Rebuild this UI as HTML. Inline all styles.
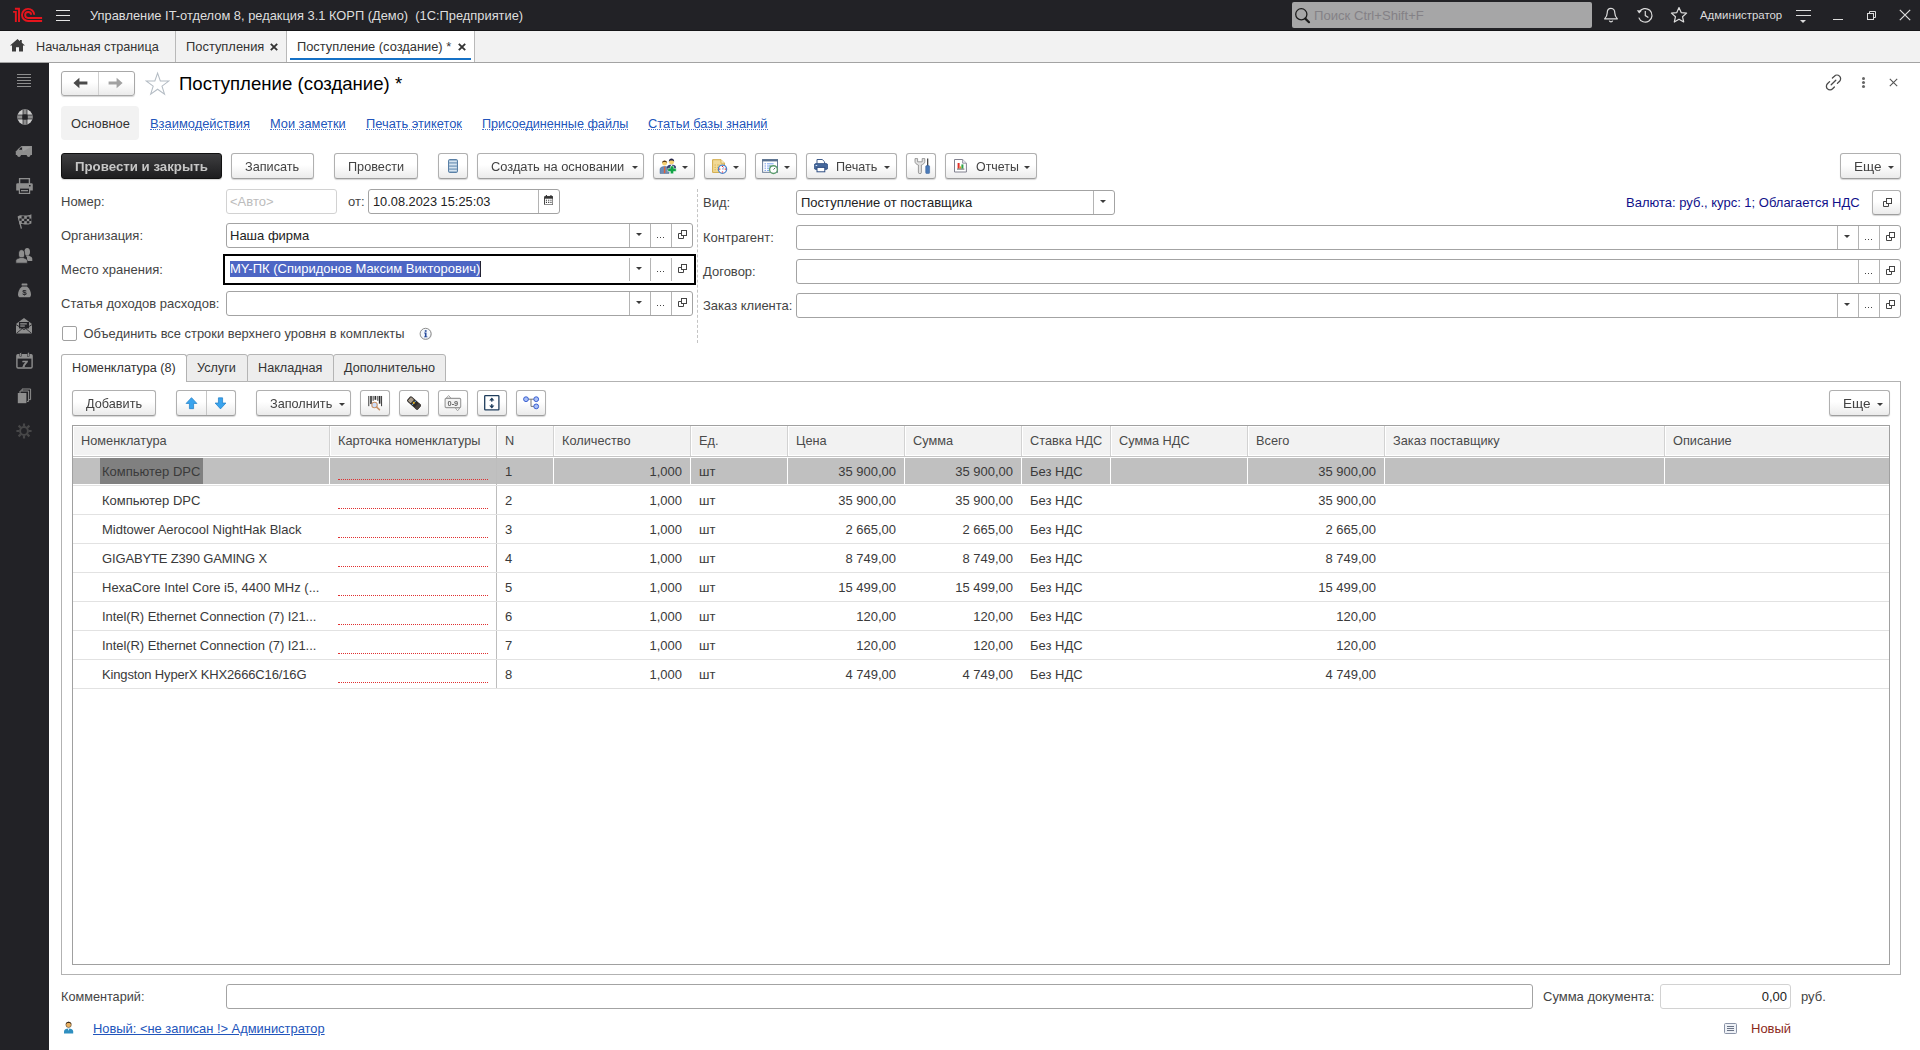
<!DOCTYPE html>
<html lang="ru">
<head>
<meta charset="utf-8">
<title>Поступление (создание) *</title>
<style>
*{box-sizing:border-box;margin:0;padding:0}
html,body{width:1920px;height:1050px;overflow:hidden;background:#fff}
body{font-family:"Liberation Sans",sans-serif;font-size:13px;color:#333;position:relative}
.a{position:absolute}
.t{position:absolute;white-space:pre;line-height:16px;height:16px}
#titlebar{position:absolute;left:0;top:0;width:1920px;height:31px;background:#222226;border-bottom:1px solid #151517}
#tabbar{position:absolute;left:0;top:31px;width:1920px;height:32px;background:#f2f2f2;border-bottom:1px solid #a3a3a3}
#sidebar{position:absolute;left:0;top:63px;width:49px;height:987px;background:#222226}
.tsep{position:absolute;top:0;width:1px;height:31px;background:#b9b9b9}
.btn{position:absolute;height:26px;border:1px solid #b0b0b0;border-bottom-color:#9e9e9e;border-radius:3px;background:linear-gradient(#fff,#fff 45%,#ebebeb);box-shadow:0 1px 1px rgba(0,0,0,.17);white-space:pre;color:#424242;font-size:12.7px}
.btn .t{top:5px;will-change:transform}
.btn.dark{background:linear-gradient(#3e3e40,#1d1d1f);border-color:#111;color:#c6c6c6;font-weight:bold}
.car{position:absolute;width:0;height:0;border-left:3.5px solid transparent;border-right:3.5px solid transparent;border-top:3.5px solid #3c3c3c}
.inp{position:absolute;height:26px;border:1px solid #a3a3a3;border-radius:3px;background:#fff}
.inp.dis{border-color:#d2d2d2}
.ib{position:absolute;top:0;bottom:0;width:1px;background:#b4b4b4}
.dots{position:absolute;white-space:pre;font-size:11px;line-height:12px;color:#444;letter-spacing:0}
a.l{position:absolute;white-space:pre;line-height:16px;color:#2255bb;text-decoration:none;height:14px;border-bottom:1px dotted #4a74c9}
.th{position:absolute;top:1px;height:28px;background:#f2f2f2}
.th span{position:absolute;left:7px;top:6px;line-height:16px;white-space:pre;color:#4a4a4a;font-size:12.75px}
.c{position:absolute;white-space:pre;line-height:16px;height:16px;color:#3a3a3a}
.r{text-align:right}
.hl{position:absolute;left:1px;height:1px;background:#e2e2e2}
.vl{position:absolute;width:1px;background:#d6d6d6}
</style>
</head>
<body>
<div id="titlebar">
<svg class="a" style="left:0;top:0" width="50" height="31" viewBox="0 0 50 31"><g fill="none" stroke="#e5151d" stroke-width="1.9"><path d="M14.9 8.75 H19 V22"/><path d="M13.1 11.9 H15.85 V22"/><path d="M34.2 14.7 A6.1 6.1 0 1 0 28.1 21.05 H42.1"/><path d="M31.15 14.8 A3 3 0 1 0 28.2 17.95 H42.1"/></g></svg>
<div class="a" style="left:56px;top:10px;width:14px;height:1px;background:#e4e4e4;box-shadow:0 5px 0 #e4e4e4,0 10px 0 #e4e4e4"></div>
<div class="t" style="left:90px;top:8px;color:#dedede;font-size:12.86px">Управление IT-отделом 8, редакция 3.1 КОРП (Демо)  (1С:Предприятие)</div>
<div class="a" style="left:1292px;top:2px;width:300px;height:26px;background:#a6a6a7;border-radius:2px"></div>
<svg class="a" style="left:1294px;top:7px" width="18" height="18" viewBox="0 0 18 18"><circle cx="7.3" cy="7.3" r="5.6" fill="none" stroke="#1c1c1c" stroke-width="1.3"/><path d="M11.3 11.6 L15 15.2" stroke="#1c1c1c" stroke-width="2.2" stroke-linecap="round"/></svg>
<div class="t" style="left:1314px;top:7.5px;color:#848186;font-size:13.1px">Поиск Ctrl+Shift+F</div>
<svg class="a" style="left:1603px;top:7px" width="16" height="17" viewBox="0 0 16 17"><path d="M8 1.3 C5.2 1.3 4.2 3.6 4.2 6 C4.2 9.2 2.8 10.6 1.6 11.8 H14.4 C13.2 10.6 11.8 9.2 11.8 6 C11.8 3.6 10.8 1.3 8 1.3 Z" fill="none" stroke="#dcdcdc" stroke-width="1.2" stroke-linejoin="round"/><path d="M6.3 13.6 A1.8 1.8 0 0 0 9.7 13.6" fill="none" stroke="#dcdcdc" stroke-width="1.2"/></svg>
<svg class="a" style="left:1636px;top:6px" width="18" height="18" viewBox="0 0 18 18"><path d="M3.2 6.2 A6.8 6.8 0 1 1 2.8 11.6" fill="none" stroke="#dcdcdc" stroke-width="1.2"/><path d="M0.8 4.2 L3.2 7.4 L6 4.6 Z" fill="#dcdcdc"/><path d="M9.3 5 V9.6 L12.4 11.6" fill="none" stroke="#dcdcdc" stroke-width="1.2"/></svg>
<svg class="a" style="left:1670px;top:6px" width="18" height="18" viewBox="0 0 18 18"><path d="M9 1.6 L11.2 6.6 L16.6 7.1 L12.5 10.7 L13.7 16 L9 13.2 L4.3 16 L5.5 10.7 L1.4 7.1 L6.8 6.6 Z" fill="none" stroke="#dcdcdc" stroke-width="1.2" stroke-linejoin="round"/></svg>
<div class="t" style="left:1700px;top:8px;color:#dcdcdc;font-size:11.4px;line-height:14px">Администратор</div>
<div class="a" style="left:1796px;top:10px;width:15px;height:1px;background:#dcdcdc;box-shadow:0 5px 0 #dcdcdc"></div><div class="a" style="left:1799px;top:15px;width:9px;height:1px;background:#222226"></div>
<div class="a" style="left:1796px;top:10px;width:15px;height:1px;background:#dcdcdc"></div><div class="a" style="left:1796px;top:15px;width:15px;height:1px;background:#dcdcdc"></div><div class="a" style="left:1800px;top:20px;width:0;height:0;border-left:3.5px solid transparent;border-right:3.5px solid transparent;border-top:3.5px solid #dcdcdc"></div>
<div class="a" style="left:1833px;top:19px;width:10px;height:1px;background:#dcdcdc"></div>
<svg class="a" style="left:1866px;top:10px" width="11" height="11" viewBox="0 0 11 11"><path d="M3.5 3 V1.5 H9.5 V7.5 H8" fill="none" stroke="#dcdcdc" stroke-width="1"/><rect x="1.5" y="3.5" width="6" height="6" fill="none" stroke="#dcdcdc" stroke-width="1"/></svg>
<svg class="a" style="left:1899px;top:9px" width="12" height="12" viewBox="0 0 12 12"><path d="M0.8 0.8 L11.2 11.2 M11.2 0.8 L0.8 11.2" stroke="#dcdcdc" stroke-width="1.2"/></svg>
</div>
<div id="tabbar">
<svg class="a" style="left:10px;top:8px" width="15" height="13" viewBox="0 0 15 13"><path d="M7.5 0 L0 6.6 H2 V12.4 H6 V8.2 H9 V12.4 H13 V6.6 H15 L11.8 3.8 V1 H10 V2.2 Z" fill="#3c3c3c"/></svg>
<div class="t" style="left:36px;top:8px;color:#333;font-size:12.7px">Начальная страница</div>
<div class="tsep" style="left:175px"></div>
<div class="t" style="left:186px;top:8px;color:#333;font-size:12.9px">Поступления</div>
<svg class="a" style="left:270px;top:12px" width="8" height="8" viewBox="0 0 8 8"><path d="M0.8 0.8 L7.2 7.2 M7.2 0.8 L0.8 7.2" stroke="#333" stroke-width="1.85"/></svg>
<div class="tsep" style="left:286px"></div>
<div class="a" style="left:287px;top:0;width:187px;height:31px;background:#fff"></div>
<div class="t" style="left:297px;top:8px;color:#333;font-size:12.85px">Поступление (создание) *</div>
<svg class="a" style="left:458px;top:12px" width="8" height="8" viewBox="0 0 8 8"><path d="M0.8 0.8 L7.2 7.2 M7.2 0.8 L0.8 7.2" stroke="#333" stroke-width="1.85"/></svg>
<div class="a" style="left:290px;top:27px;width:181px;height:2px;background:#1571c6"></div>
<div class="tsep" style="left:474px"></div>
</div>
<div id="sidebar">
<div class="a" style="left:17px;top:11px;width:14px;height:1px;background:#8e8e8e;box-shadow:0 3px 0 #8e8e8e,0 6px 0 #8e8e8e,0 9px 0 #8e8e8e,0 12px 0 #8e8e8e"></div>
<svg class="a" style="left:16.5px;top:46px" width="16" height="16" viewBox="0 0 16 16"><defs><clipPath id="lb"><circle cx="8" cy="8" r="7.7"/></clipPath></defs><g clip-path="url(#lb)"><rect width="16" height="16" fill="#cbcbcb"/><rect x="5.6" y="0" width="4.8" height="16" fill="#3a3a3e"/><rect x="0" y="5.6" width="16" height="4.8" fill="#3a3a3e"/><rect x="6.5" y="0" width="3" height="16" fill="#8e8e8e"/><rect x="0" y="6.5" width="16" height="3" fill="#8e8e8e"/></g><rect x="5.2" y="5.2" width="5.6" height="5.6" rx="1.6" fill="#222226"/></svg>
<svg class="a" style="left:15px;top:82px" width="18" height="13" viewBox="0 0 18 13"><path d="M6.5 1 H17 V10 H0.8 V6.4 L3.6 3.6 Z" fill="#8e8e8e"/><path d="M8 1.8 H16.2 L8 6.6Z" fill="#9c9c9c"/><path d="M4.2 4.2 L5.8 2.6 H7 V4.8 H4.2Z" fill="#222226"/><circle cx="4" cy="10.3" r="1.7" fill="#8e8e8e"/><circle cx="13.6" cy="10.3" r="1.7" fill="#8e8e8e"/></svg>
<svg class="a" style="left:16px;top:115px" width="17" height="16" viewBox="0 0 17 16"><rect x="3.6" y="0.6" width="9.8" height="6" fill="none" stroke="#8e8e8e" stroke-width="1.4"/><path d="M1.5 5.2 H15.5 A1.3 1.3 0 0 1 16.8 6.5 V12.6 H0.2 V6.5 A1.3 1.3 0 0 1 1.5 5.2Z" fill="#8e8e8e"/><rect x="3.4" y="10" width="10.2" height="5.4" fill="#222226" stroke="#8e8e8e" stroke-width="1.2"/><rect x="5" y="12" width="7" height="1.3" fill="#8e8e8e"/><rect x="13" y="7" width="1.6" height="1.4" fill="#222226"/></svg>
<svg class="a" style="left:16px;top:150px" width="17" height="17" viewBox="0 0 17 17"><path d="M2 3.2 C5 0.6 8.5 4.4 15.4 1.2 V10.4 C9 13.4 6 9.6 3.6 11.6 Z" fill="#8e8e8e"/><path d="M2.2 3.4 L5.4 15.6" stroke="#8e8e8e" stroke-width="1.3"/><g fill="#222226"><rect x="5.6" y="3.2" width="2.6" height="2.4"/><rect x="10.8" y="3.6" width="2.6" height="2.4"/><rect x="8.2" y="5.8" width="2.6" height="2.4"/><rect x="5.8" y="8" width="2.4" height="2.2"/><rect x="10.8" y="8.2" width="2.6" height="2.2"/><rect x="13.2" y="5.6" width="2.2" height="2.4"/><rect x="3.4" y="5.4" width="2.2" height="2.4"/></g></svg>
<svg class="a" style="left:15px;top:184px" width="18" height="17" viewBox="0 0 18 17"><ellipse cx="12.2" cy="4.7" rx="2.8" ry="3.8" fill="#8e8e8e"/><path d="M10.6 8.6 H13.8 C15.2 9.6 17.3 9.8 17.3 11.8 V14 H12 V10.6Z" fill="#8e8e8e"/><ellipse cx="6.6" cy="7" rx="3.1" ry="4.3" fill="#8e8e8e" stroke="#222226" stroke-width="0.8"/><path d="M0.8 16.2 V13.6 C0.8 11.8 3.4 11.6 5 10.6 H8.2 C9.8 11.6 12.4 11.8 12.4 13.6 V16.2Z" fill="#8e8e8e" stroke="#222226" stroke-width="0.7"/></svg>
<svg class="a" style="left:17px;top:220px;will-change:transform" width="15" height="15" viewBox="0 0 15 15"><rect x="4.6" y="0.6" width="5.8" height="2" rx="0.6" fill="#8e8e8e"/><path d="M5 3.4 H10 C12.6 5.6 14 8.6 14 11.4 C14 13.4 13 14.2 11.6 14.2 H3.4 C2 14.2 1 13.4 1 11.4 C1 8.6 2.4 5.6 5 3.4Z" fill="#8e8e8e"/><text x="7.5" y="12.2" font-family="Liberation Sans,sans-serif" font-size="8" font-weight="bold" fill="#222226" text-anchor="middle">$</text></svg>
<svg class="a" style="left:15px;top:254px" width="18" height="18" viewBox="0 0 18 18"><path d="M1 7 L9 1 L17 7 V16.6 H1Z" fill="#8e8e8e"/><rect x="4" y="5" width="10" height="6.4" fill="#222226"/><rect x="5.2" y="6.2" width="6.6" height="1.3" fill="#8e8e8e"/><rect x="5.2" y="8.4" width="4.6" height="1.3" fill="#8e8e8e"/><path d="M1 7.6 L9 12.6 L17 7.6" fill="none" stroke="#222226" stroke-width="0.9"/><path d="M1.4 16.4 L7.2 11.6 M16.6 16.4 L10.8 11.6" stroke="#222226" stroke-width="0.8"/></svg>
<svg class="a" style="left:16px;top:289px;will-change:transform" width="17" height="17" viewBox="0 0 17 17"><rect x="0.9" y="2.6" width="15.2" height="13.4" rx="1.2" fill="none" stroke="#8e8e8e" stroke-width="1.4"/><rect x="0.9" y="2.6" width="15.2" height="4" fill="#8e8e8e"/><rect x="3.8" y="0.4" width="1.6" height="4" fill="#8e8e8e" stroke="#222226" stroke-width="0.5"/><rect x="11.6" y="0.4" width="1.6" height="4" fill="#8e8e8e" stroke="#222226" stroke-width="0.5"/><text x="8.6" y="14.6" font-family="Liberation Sans,sans-serif" font-size="9.5" font-weight="bold" font-style="italic" fill="#8e8e8e" stroke="#8e8e8e" stroke-width=".6" text-anchor="middle">7</text></svg>
<svg class="a" style="left:17px;top:325px" width="15" height="16" viewBox="0 0 15 16"><path d="M5 3 V1 H13.6 V11.6 H12" fill="none" stroke="#8e8e8e" stroke-width="1"/><path d="M3 5 V3 H11.6 V13.4 H10" fill="none" stroke="#8e8e8e" stroke-width="1"/><rect x="0.8" y="5" width="8.6" height="10.2" fill="#8e8e8e"/></svg>
<svg class="a" style="left:16px;top:360px" width="16" height="16" viewBox="0 0 16 16"><circle cx="8" cy="8" r="3.9" fill="none" stroke="#474748" stroke-width="2"/><g stroke="#474748" stroke-width="2.2"><path d="M8 0.4V3.4M8 12.6V15.6M0.4 8H3.4M12.6 8H15.6M2.6 2.6L4.8 4.8M11.2 11.2L13.4 13.4M13.4 2.6L11.2 4.8M4.8 11.2L2.6 13.4"/></g></svg>
</div>
<div class="btn" style="left:61px;top:71px;width:74px;height:25px;border-color:#a8a8a8"></div>
<div class="a" style="left:98px;top:72px;width:1px;height:23px;background:#d0d0d0"></div>
<svg class="a" style="left:73px;top:77px" width="15" height="12" viewBox="0 0 15 12"><path d="M0.4 6 L6.4 0.8 V4.6 H14.4 V7.4 H6.4 V11.2Z" fill="#4a4a4a"/></svg>
<svg class="a" style="left:108px;top:77px" width="15" height="12" viewBox="0 0 15 12"><path d="M14.6 6 L8.6 0.8 V4.6 H0.6 V7.4 H8.6 V11.2Z" fill="#a2a2a2"/></svg>
<svg class="a" style="left:144.6px;top:70.6px" width="25.2" height="25.2" viewBox="0 0 24 24"><path d="M12 2 L14.6 9.4 L22.6 9.6 L16.2 14.4 L18.6 22 L12 17.4 L5.4 22 L7.8 14.4 L1.4 9.6 L9.4 9.4 Z" fill="#fff" stroke="#b4bcc4" stroke-width="1"/></svg>
<div class="t" style="left:179px;top:73px;color:#000;font-size:18.6px;line-height:22px;height:22px">Поступление (создание) *</div>
<svg class="a" style="left:1825px;top:74px" width="17" height="17" viewBox="0 0 17 17"><g fill="none" stroke="#4a4a4a" stroke-width="1.3" stroke-linecap="round"><path d="M7.4 4 L9.4 2.2 A3.5 3.5 0 0 1 14.6 7.2 L12.4 9.4"/><path d="M9.4 13 L7.6 14.8 A3.5 3.5 0 0 1 2.4 9.8 L4.6 7.6"/><path d="M6.2 10.8 L10.8 6.2"/></g></svg>
<div class="a" style="left:1862px;top:77px;width:3px;height:3px;border-radius:2px;background:#666;box-shadow:0 4px 0 #666,0 8px 0 #666"></div>
<svg class="a" style="left:1889px;top:78px" width="9" height="9" viewBox="0 0 9 9"><path d="M0.8 0.8 L8.2 8.2 M8.2 0.8 L0.8 8.2" stroke="#555" stroke-width="1.1"/></svg>
<div class="a" style="left:61px;top:106px;width:78px;height:34px;background:#f2f2f2;border-radius:4px"></div>
<div class="t" style="left:71px;top:116px;color:#333;font-size:12.85px">Основное</div>
<a class="l" style="left:150px;top:116px;font-size:12.9px">Взаимодействия</a>
<a class="l" style="left:270px;top:116px;font-size:12.8px">Мои заметки</a>
<a class="l" style="left:366px;top:116px;font-size:12.85px">Печать этикеток</a>
<a class="l" style="left:482px;top:116px;font-size:12.65px">Присоединенные файлы</a>
<a class="l" style="left:648px;top:116px;font-size:12.85px">Статьи базы знаний</a>
<div class="btn dark" style="left:61px;top:153px;width:161px;"><div class="t" style="left:13px;font-size:13.25px">Провести и закрыть</div></div>
<div class="btn" style="left:231px;top:153px;width:83px;"><div class="t" style="left:13px;">Записать</div></div>
<div class="btn" style="left:334px;top:153px;width:84px;"><div class="t" style="left:13px;">Провести</div></div>
<div class="btn" style="left:438px;top:153px;width:30px;"><svg class="a" style="left:9px;top:5px" width="10" height="14" viewBox="0 0 10 14"><rect x="0.5" y="0.5" width="9" height="13" rx="1.2" fill="#8eacc8" stroke="#5a80a6"/><path d="M1.2 2.4H8.8M1.2 5.5H8.8M1.2 8.6H8.8M1.2 11.7H8.8" stroke="#d6e4f0" stroke-width="1.3"/></svg></div>
<div class="btn" style="left:477px;top:153px;width:167px;"><div class="t" style="left:13px;font-size:12.85px">Создать на основании</div><div class="car" style="left:154px;top:12px"></div></div>
<div class="btn" style="left:653px;top:153px;width:42px;"><svg class="a" style="left:5px;top:3px" width="18" height="18" viewBox="0 0 18 18"><path d="M1 16.5 V12.4 C1 10.4 3 10 4.4 9.6 H6.8 C8.2 10 10 10.4 10 12.4 V16.5Z" fill="#6d8db6" stroke="#4a6890" stroke-width=".5"/><path d="M5 9.8 H6.2 L6.4 15.6 L5.6 16.4 L4.8 15.6Z" fill="#e0603a"/><circle cx="5.6" cy="6.2" r="2.4" fill="#f6d070"/><path d="M3 6 C2.8 2.6 8.4 2.6 8.2 6 C7.4 4.6 3.8 4.6 3 6Z" fill="#5a3812"/><path d="M8 13 V10.2 C8 8.6 9.8 8.2 11 7.8 H14 C15.4 8.2 17 8.6 17 10.2 V13Z" fill="#2c3c6c"/><path d="M11.8 7.8 L12.5 10.4 L13.2 7.8Z" fill="#fff"/><circle cx="12.5" cy="4.8" r="2.5" fill="#f6d070"/><path d="M9.8 4.6 C9.6 0.6 15.4 0.6 15.2 4.6 C14.4 3 10.6 3 9.8 4.6Z" fill="#26264a"/><path d="M11.4 9 H14.6 V11.3 H17.2 V14.5 H14.6 V16.8 H11.4 V14.5 H8.8 V11.3 H11.4Z" fill="#12a446" stroke="#fff" stroke-width=".5"/></svg><div class="car" style="left:28px;top:12px"></div></div>
<div class="btn" style="left:704px;top:153px;width:42px;"><svg class="a" style="left:6px;top:3px" width="18" height="18" viewBox="0 0 18 18"><path d="M1.6 2.7 H10 L13.5 6.2 V15.4 H1.6Z" fill="#f2da96" stroke="#d2aa48" stroke-width="1"/><path d="M10 2.7 V6.2 H13.5" fill="#fbf0cc" stroke="#d2aa48" stroke-width=".8"/><path d="M3.4 8H5M6 8H8.6M3.4 10.4H5M6 10.4H7.4M3.4 12.8H5M6 12.8H6.8" stroke="#d8b45a" stroke-width=".9"/><circle cx="11.5" cy="12.2" r="4.1" fill="#fff" stroke="#4a80c8" stroke-width="1.3"/><path d="M11.5 8.9V10M11.5 14.4V15.5M8.2 12.2H9.3M13.7 12.2H14.8" stroke="#e8242a" stroke-width="1.2"/><path d="M12.8 10.2 L11.5 12.2 H12.6" stroke="#7a8ac0" stroke-width=".8" fill="none"/></svg><div class="car" style="left:28px;top:12px"></div></div>
<div class="btn" style="left:755px;top:153px;width:42px;"><svg class="a" style="left:5px;top:3px" width="18" height="18" viewBox="0 0 18 18"><rect x="1.6" y="2.7" width="14.9" height="12.6" fill="#fff" stroke="#6a7c96" stroke-width="1"/><rect x="1.1" y="2.2" width="15.9" height="2.2" fill="#58708e"/><path d="M3.6 6.8H4.8M3.6 9H4.8M3.6 11.2H4.8M3.6 13.4H4.8" stroke="#5a86e0" stroke-width="1"/><path d="M6 6.8H12.6M6 9H10M6 11.2H8.4M6 13.4H8" stroke="#78a4f0" stroke-width="1"/><circle cx="12.5" cy="12.6" r="3.9" fill="#fff" stroke="#5a9c6c" stroke-width="1.4"/><path d="M12.5 12.6 L14.2 10.8" stroke="#4a6a5a" stroke-width="1"/><path d="M8.4 8.6 L11 8.8 L9.2 10.8Z" fill="#5a9c6c"/></svg><div class="car" style="left:28px;top:12px"></div></div>
<div class="btn" style="left:806px;top:153px;width:91px;"><svg class="a" style="left:7px;top:5.4px" width="14" height="13.4" viewBox="0 0 14 13.4"><path d="M3 4.8 V0.5 H8.2 L10.6 2.8 V4.8" fill="#fff" stroke="#3c5a8a" stroke-width="1"/><rect x="0.4" y="4.6" width="13.2" height="5.8" rx="1.5" fill="#46689c" stroke="#2f4e82" stroke-width=".8"/><rect x="3" y="8.4" width="7.8" height="4.4" fill="#fff" stroke="#2f4e82" stroke-width="1"/><rect x="1.6" y="6" width="1.6" height="1" fill="#cfe0f4"/></svg><div class="t" style="left:29px;font-size:12.6px">Печать</div><div class="car" style="left:77px;top:12px"></div></div>
<div class="btn" style="left:906px;top:153px;width:30px;"><svg class="a" style="left:6.6px;top:4.4px" width="17" height="16" viewBox="0 0 17 16"><path d="M1 0.6 V3.6 C1 5.4 2.6 6.4 4.4 7 V14.2 A1.5 1.5 0 0 0 7.4 14.2 V7 C9.2 6.4 10.8 5.4 10.8 3.6 V0.6 H8.2 V3.8 H3.6 V0.6 Z" fill="#e2e2e2" stroke="#858585" stroke-width=".8"/><rect x="13" y="0.5" width="1.3" height="8" fill="#484848"/><rect x="11.7" y="7.6" width="3.9" height="8" rx="1" fill="#4a7ab8" stroke="#2f5a94" stroke-width=".5"/></svg></div>
<div class="btn" style="left:945px;top:153px;width:92px;"><svg class="a" style="left:8px;top:5px" width="13" height="14" viewBox="0 0 13 14"><path d="M0.5 0.5 H8.6 L12.4 4.2 V13 H0.5Z" fill="#fff" stroke="#80808e" stroke-width="1"/><path d="M8.6 0.5 V4.2 H12.4" fill="#ececf2" stroke="#80808e" stroke-width=".8"/><rect x="3.6" y="4" width="2" height="5.6" fill="#e2302a"/><rect x="5.8" y="7.4" width="1.4" height="2.2" fill="#e9a21d"/><rect x="7.4" y="5.4" width="2" height="4.2" fill="#2fa44c"/><path d="M3 10.1 H10.4" stroke="#555" stroke-width=".9"/></svg><div class="t" style="left:30px;font-size:12.4px">Отчеты</div><div class="car" style="left:78px;top:12px"></div></div>
<div class="btn" style="left:1840px;top:153px;width:61px;"><div class="t" style="left:13px;font-size:13.5px">Еще</div><div class="car" style="left:47px;top:12px"></div></div>
<div class="t" style="left:61px;top:194px;color:#444">Номер:</div>
<div class="inp dis" style="left:226px;top:189px;width:111px;height:25px"><div class="t" style="left:3px;top:4px;color:#bcbcbc">&lt;Авто&gt;</div></div>
<div class="t" style="left:348px;top:194px;color:#444">от:</div>
<div class="inp" style="left:368px;top:189px;width:192px;height:25px"><div class="t" style="left:4px;top:4px;color:#222;font-size:12.8px">10.08.2023 15:25:03</div><div class="ib" style="left:169px"></div><div class="a" style="left:170px;top:0"><svg class="a" style="left:5px;top:5px" width="9.4" height="10.4" viewBox="0 0 10 11"><rect x="0.5" y="1.5" width="9" height="9" rx=".8" fill="#fff" stroke="#333" stroke-width="1"/><rect x="0.5" y="1.5" width="9" height="2.4" fill="#333"/><rect x="2" y="0" width="1.2" height="2" fill="#333"/><rect x="6.8" y="0" width="1.2" height="2" fill="#333"/><path d="M2 5.6H3.2M4.4 5.6H5.6M6.8 5.6H8M2 7.8H3.2M4.4 7.8H5.6M6.8 7.8H8" stroke="#333" stroke-width="1.2"/></svg></div></div>
<div class="t" style="left:61px;top:228px;color:#444">Организация:</div>
<div class="inp" style="left:226px;top:223px;width:467px;height:25px"><div class="t" style="left:3px;top:4px;color:#222">Наша фирма</div><div class="ib" style="left:402px"></div><div class="car" style="left:409px;top:9px"></div><div class="ib" style="left:423px"></div><div class="a" style="left:430px;top:13px;width:1px;height:1px;background:#444;box-shadow:3px 0 0 #444,6px 0 0 #444"></div><div class="ib" style="left:444px"></div><svg class="a" style="left:451px;top:6px" width="9" height="9" viewBox="0 0 9 9"><path d="M3 3.5 H0.5 V8.5 H5.5 V6" fill="none" stroke="#444" stroke-width="1"/><rect x="3.5" y="0.5" width="5" height="5" fill="none" stroke="#444" stroke-width="1"/></svg></div>
<div class="t" style="left:61px;top:262px;color:#444">Место хранения:</div>
<div class="a" style="left:223px;top:254px;width:473px;height:31px;border:2px solid #000;background:#fff"></div>
<div class="a" style="left:230px;top:261px;width:251px;height:16px;background:#4d66c4"></div>
<div class="t" style="left:230px;top:261px;color:#fff;font-size:13px">MY-ПК (Спиридонов Максим Викторович)</div>
<div class="a" style="left:480px;top:261px;width:1px;height:16px;background:#223"></div>
<div class="a" style="left:227px;top:258px;width:466px;height:23px"><div class="ib" style="left:402px"></div><div class="car" style="left:409px;top:9px"></div><div class="ib" style="left:423px"></div><div class="a" style="left:430px;top:13px;width:1px;height:1px;background:#444;box-shadow:3px 0 0 #444,6px 0 0 #444"></div><div class="ib" style="left:444px"></div><svg class="a" style="left:451px;top:6px" width="9" height="9" viewBox="0 0 9 9"><path d="M3 3.5 H0.5 V8.5 H5.5 V6" fill="none" stroke="#444" stroke-width="1"/><rect x="3.5" y="0.5" width="5" height="5" fill="none" stroke="#444" stroke-width="1"/></svg></div>
<div class="t" style="left:61px;top:296px;color:#444">Статья доходов расходов:</div>
<div class="inp" style="left:226px;top:291px;width:467px;height:25px"><div class="ib" style="left:402px"></div><div class="car" style="left:409px;top:9px"></div><div class="ib" style="left:423px"></div><div class="a" style="left:430px;top:13px;width:1px;height:1px;background:#444;box-shadow:3px 0 0 #444,6px 0 0 #444"></div><div class="ib" style="left:444px"></div><svg class="a" style="left:451px;top:6px" width="9" height="9" viewBox="0 0 9 9"><path d="M3 3.5 H0.5 V8.5 H5.5 V6" fill="none" stroke="#444" stroke-width="1"/><rect x="3.5" y="0.5" width="5" height="5" fill="none" stroke="#444" stroke-width="1"/></svg></div>
<div class="a" style="left:62px;top:326px;width:15px;height:15px;border:1px solid #a0a0a0;border-radius:2px;background:#fff"></div>
<div class="t" style="left:83.5px;top:326px;color:#444;font-size:12.9px">Объединить все строки верхнего уровня в комплекты</div>
<svg class="a" style="left:419px;top:327px" width="14" height="14" viewBox="0 0 14 14"><circle cx="6.9" cy="7.2" r="5.9" fill="#d8d8d8"/><circle cx="6.6" cy="6.8" r="5.5" fill="#f4f7fb" stroke="#8e8e8e" stroke-width="1"/><path d="M5.2 5.6 H7.5 V9.4 H8.4 V10.3 H5 V9.4 H5.9 V6.5 H5.2Z" fill="#23479a"/><rect x="5.8" y="3.2" width="1.8" height="1.6" fill="#23479a"/></svg>
<div class="a" style="left:697px;top:189px;width:0;height:154px;border-left:1px dashed #c4c4c4"></div>
<div class="t" style="left:703px;top:195px;color:#444">Вид:</div>
<div class="inp" style="left:796px;top:190px;width:319px;height:25px"><div class="t" style="left:4px;top:4px;color:#222">Поступление от поставщика</div><div class="ib" style="left:296px"></div><div class="car" style="left:303px;top:9px"></div></div>
<div class="t" style="left:1626px;top:195px;color:#10108a;font-size:13px">Валюта: руб., курс: 1; Облагается НДС</div>
<div class="btn" style="left:1872px;top:190px;width:29px;height:25px"><svg class="a" style="left:10px;top:7px" width="9" height="9" viewBox="0 0 9 9"><path d="M3 3.5 H0.5 V8.5 H5.5 V6" fill="none" stroke="#444" stroke-width="1"/><rect x="3.5" y="0.5" width="5" height="5" fill="none" stroke="#444" stroke-width="1"/></svg></div>
<div class="t" style="left:703px;top:230px;color:#444">Контрагент:</div>
<div class="inp" style="left:796px;top:225px;width:1105px;height:25px"><div class="ib" style="left:1040px"></div><div class="car" style="left:1047px;top:9px"></div><div class="ib" style="left:1061px"></div><div class="a" style="left:1068px;top:13px;width:1px;height:1px;background:#444;box-shadow:3px 0 0 #444,6px 0 0 #444"></div><div class="ib" style="left:1082px"></div><svg class="a" style="left:1089px;top:6px" width="9" height="9" viewBox="0 0 9 9"><path d="M3 3.5 H0.5 V8.5 H5.5 V6" fill="none" stroke="#444" stroke-width="1"/><rect x="3.5" y="0.5" width="5" height="5" fill="none" stroke="#444" stroke-width="1"/></svg></div>
<div class="t" style="left:703px;top:264px;color:#444">Договор:</div>
<div class="inp" style="left:796px;top:259px;width:1105px;height:25px"><div class="ib" style="left:1061px"></div><div class="a" style="left:1068px;top:13px;width:1px;height:1px;background:#444;box-shadow:3px 0 0 #444,6px 0 0 #444"></div><div class="ib" style="left:1082px"></div><svg class="a" style="left:1089px;top:6px" width="9" height="9" viewBox="0 0 9 9"><path d="M3 3.5 H0.5 V8.5 H5.5 V6" fill="none" stroke="#444" stroke-width="1"/><rect x="3.5" y="0.5" width="5" height="5" fill="none" stroke="#444" stroke-width="1"/></svg></div>
<div class="t" style="left:703px;top:298px;color:#444">Заказ клиента:</div>
<div class="inp" style="left:796px;top:293px;width:1105px;height:25px"><div class="ib" style="left:1040px"></div><div class="car" style="left:1047px;top:9px"></div><div class="ib" style="left:1061px"></div><div class="a" style="left:1068px;top:13px;width:1px;height:1px;background:#444;box-shadow:3px 0 0 #444,6px 0 0 #444"></div><div class="ib" style="left:1082px"></div><svg class="a" style="left:1089px;top:6px" width="9" height="9" viewBox="0 0 9 9"><path d="M3 3.5 H0.5 V8.5 H5.5 V6" fill="none" stroke="#444" stroke-width="1"/><rect x="3.5" y="0.5" width="5" height="5" fill="none" stroke="#444" stroke-width="1"/></svg></div>
<div class="a" style="left:61px;top:381px;width:1840px;height:594px;border:1px solid #b2b2b2;background:#fff"></div>
<div class="a" style="left:186px;top:354px;width:62px;height:28px;background:#ededed;border:1px solid #b4b4b4;border-radius:3px 3px 0 0"><div class="t" style="left:10px;top:5px;color:#333;font-size:12.65px">Услуги</div></div>
<div class="a" style="left:247px;top:354px;width:87px;height:28px;background:#ededed;border:1px solid #b4b4b4;border-radius:3px 3px 0 0"><div class="t" style="left:10px;top:5px;color:#333;font-size:12.65px">Накладная</div></div>
<div class="a" style="left:333px;top:354px;width:113px;height:28px;background:#ededed;border:1px solid #b4b4b4;border-radius:3px 3px 0 0"><div class="t" style="left:10px;top:5px;color:#333;font-size:12.65px">Дополнительно</div></div>
<div class="a" style="left:61px;top:354px;width:126px;height:28px;background:#fff;border:1px solid #b2b2b2;border-bottom:none;border-radius:3px 3px 0 0"><div class="t" style="left:10px;top:5px;color:#333;font-size:12.65px">Номенклатура (8)</div></div>
<div class="btn" style="left:72px;top:390px;width:84px;"><div class="t" style="left:13px;">Добавить</div></div>
<div class="btn" style="left:176px;top:390px;width:60px;"><div class="a" style="left:29px;top:0;width:1px;height:24px;background:#c6c6c6"></div><svg class="a" style="left:7.5px;top:6px" width="13" height="12.5" viewBox="0 0 12 12"><path d="M6 0.6 L11.2 6.2 H8 V11.2 H4 V6.2 H0.8Z" fill="#3aa4ee" stroke="#2380c8" stroke-width=".7"/></svg><svg class="a" style="left:36.5px;top:6px" width="13" height="12.5" viewBox="0 0 12 12"><path d="M6 11.4 L11.2 5.8 H8 V0.8 H4 V5.8 H0.8Z" fill="#3aa4ee" stroke="#2380c8" stroke-width=".7"/></svg></div>
<div class="btn" style="left:256px;top:390px;width:95px;"><div class="t" style="left:13px;">Заполнить</div><div class="car" style="left:82px;top:12px"></div></div>
<div class="btn" style="left:360px;top:390px;width:30px;"><svg class="a" style="left:6px;top:4px" width="16" height="16.4" preserveAspectRatio="none" viewBox="0 0 17 17"><g fill="#2e2e2e"><rect x="1.4" y="1" width="1" height="10.6"/><rect x="3.4" y="1" width="1.7" height="8.4"/><rect x="6" y="1" width="1" height="5"/><rect x="8" y="1" width="1.8" height="4"/><rect x="11" y="1" width="1" height="5"/><rect x="12.6" y="1" width="1.7" height="8"/><rect x="15" y="1" width="1" height="10.6"/></g><circle cx="8" cy="10.4" r="2.9" fill="#cfe0fa" stroke="#c8926a" stroke-width="1.1"/><path d="M10.2 12.6 L13.2 15.2" stroke="#c8926a" stroke-width="1.7" stroke-linecap="round"/></svg></div>
<div class="btn" style="left:399px;top:390px;width:30px;"><svg class="a" style="left:5px;top:3px" width="18" height="18" viewBox="0 0 18 18"><g transform="rotate(-48 9 9)"><rect x="5.7" y="1.8" width="6.6" height="14.4" rx="1.5" fill="#2e2a28"/><rect x="6.6" y="2.8" width="4.8" height="4" rx=".6" fill="#a89c8c"/><rect x="8" y="8" width="2" height="1.6" fill="#f0c030"/><rect x="6.4" y="8.2" width="1.2" height="1.2" fill="#6aa8d8"/><rect x="10.4" y="8.2" width="1.2" height="1.2" fill="#6aa8d8"/><rect x="5.7" y="12.4" width="6.6" height="3.8" rx="1.3" fill="#45403c"/></g></svg></div>
<div class="btn" style="left:438px;top:390px;width:30px;"><svg class="a" style="left:5px;top:4px;will-change:transform" width="19" height="18" viewBox="0 0 19 18"><path d="M4.6 0.5 L7 3.2 H2.2Z M13.6 15.8 L11.2 12.8 H16Z" fill="#fff" stroke="#9a9a9a" stroke-width=".9"/><rect x="1.1" y="3.4" width="15.6" height="9.2" rx="1" fill="#f2f2f2" stroke="#9a9a9a" stroke-width="1.1"/><text x="8.9" y="10.6" font-family="Liberation Sans,sans-serif" font-size="7.4" font-weight="bold" fill="#666" text-anchor="middle">0-9</text></svg></div>
<div class="btn" style="left:477px;top:390px;width:30px;"><svg class="a" style="left:6px;top:4px" width="16" height="16" viewBox="0 0 16 16"><rect x="0.7" y="0.7" width="14.2" height="14.2" rx="0.6" fill="#fff" stroke="#1f3d5c" stroke-width="1.3"/><path d="M7.8 3.4V6.8M7.8 9V12.4" stroke="#1f3d5c" stroke-width="1.2"/><path d="M7.8 2.4 L10.4 5.4H5.2Z M7.8 13.4 L10.4 10.4H5.2Z" fill="#1f3d5c"/></svg></div>
<div class="btn" style="left:516px;top:390px;width:30px;"><svg class="a" style="left:6px;top:5px" width="18" height="15" viewBox="0 0 18 15"><path d="M3 3.2 H12.6 M8 3.2 V10.4 H12.6" fill="none" stroke="#777" stroke-width="1"/><circle cx="3" cy="3.2" r="2.4" fill="#a9c0f8" stroke="#3a5fd0" stroke-width="1"/><circle cx="13.2" cy="3.2" r="2.4" fill="#a9c0f8" stroke="#3a5fd0" stroke-width="1"/><circle cx="13.2" cy="10.4" r="2.4" fill="#a9c0f8" stroke="#3a5fd0" stroke-width="1"/></svg></div>
<div class="btn" style="left:1829px;top:390px;width:61px;"><div class="t" style="left:13px;font-size:13.5px">Еще</div><div class="car" style="left:47px;top:12px"></div></div>
<div class="a" style="left:72px;top:425px;width:1818px;height:540px;border:1px solid #a0a0a0;background:#fff;overflow:hidden">
<div class="th" style="left:1px;width:255px"><span style="left:7px">Номенклатура</span></div>
<div class="th" style="left:258px;width:165px"><span style="left:7px">Карточка номенклатуры</span></div>
<div class="th" style="left:425px;width:55px"><span style="left:7px">N</span></div>
<div class="th" style="left:482px;width:135px"><span style="left:7px">Количество</span></div>
<div class="th" style="left:619px;width:95px"><span style="left:7px">Ед.</span></div>
<div class="th" style="left:716px;width:115px"><span style="left:7px">Цена</span></div>
<div class="th" style="left:833px;width:115px"><span style="left:7px">Сумма</span></div>
<div class="th" style="left:950px;width:87px"><span style="left:7px">Ставка НДС</span></div>
<div class="th" style="left:1039px;width:135px"><span style="left:7px">Сумма НДС</span></div>
<div class="th" style="left:1176px;width:135px"><span style="left:7px">Всего</span></div>
<div class="th" style="left:1313px;width:278px"><span style="left:7px">Заказ поставщику</span></div>
<div class="th" style="left:1593px;width:223px"><span style="left:7px">Описание</span></div>
<div class="a" style="left:0;top:30px;width:1816px;height:1px;background:#c6c6c6"></div>
<div class="vl" style="left:256px;top:0;height:30px;background:#d2d2d2"></div>
<div class="vl" style="left:423px;top:0;height:30px;background:#d2d2d2"></div>
<div class="vl" style="left:480px;top:0;height:30px;background:#d2d2d2"></div>
<div class="vl" style="left:617px;top:0;height:30px;background:#d2d2d2"></div>
<div class="vl" style="left:714px;top:0;height:30px;background:#d2d2d2"></div>
<div class="vl" style="left:831px;top:0;height:30px;background:#d2d2d2"></div>
<div class="vl" style="left:948px;top:0;height:30px;background:#d2d2d2"></div>
<div class="vl" style="left:1037px;top:0;height:30px;background:#d2d2d2"></div>
<div class="vl" style="left:1174px;top:0;height:30px;background:#d2d2d2"></div>
<div class="vl" style="left:1311px;top:0;height:30px;background:#d2d2d2"></div>
<div class="vl" style="left:1591px;top:0;height:30px;background:#d2d2d2"></div>
<div class="vl" style="left:423px;top:0;height:263px;background:#bdbdbd"></div>
<div class="a" style="left:0px;top:32px;width:256px;height:26px;background:#c0c0c0"></div>
<div class="a" style="left:257px;top:32px;width:166px;height:26px;background:#c0c0c0"></div>
<div class="a" style="left:424px;top:32px;width:56px;height:26px;background:#c0c0c0"></div>
<div class="a" style="left:481px;top:32px;width:136px;height:26px;background:#c0c0c0"></div>
<div class="a" style="left:618px;top:32px;width:96px;height:26px;background:#c0c0c0"></div>
<div class="a" style="left:715px;top:32px;width:116px;height:26px;background:#c0c0c0"></div>
<div class="a" style="left:832px;top:32px;width:116px;height:26px;background:#c0c0c0"></div>
<div class="a" style="left:949px;top:32px;width:88px;height:26px;background:#c0c0c0"></div>
<div class="a" style="left:1038px;top:32px;width:136px;height:26px;background:#c0c0c0"></div>
<div class="a" style="left:1175px;top:32px;width:136px;height:26px;background:#c0c0c0"></div>
<div class="a" style="left:1312px;top:32px;width:279px;height:26px;background:#c0c0c0"></div>
<div class="a" style="left:1592px;top:32px;width:224px;height:26px;background:#c0c0c0"></div>
<div class="a" style="left:27px;top:32px;width:103px;height:26px;background:#808080"></div>
<div class="hl" style="top:59px;width:1816px;left:0"></div>
<div class="c" style="left:29px;top:38px;letter-spacing:0px">Компьютер DPC</div>
<div class="a" style="left:265px;top:53px;width:150px;height:0;border-top:1px dotted #e03030"></div>
<div class="c" style="left:432px;top:38px">1</div>
<div class="c r" style="left:487px;width:122px;top:38px">1,000</div>
<div class="c" style="left:626px;top:38px">шт</div>
<div class="c r" style="left:723px;width:100px;top:38px">35 900,00</div>
<div class="c r" style="left:840px;width:100px;top:38px">35 900,00</div>
<div class="c" style="left:957px;top:38px">Без НДС</div>
<div class="c r" style="left:1183px;width:120px;top:38px">35 900,00</div>
<div class="hl" style="top:88px;width:1816px;left:0"></div>
<div class="c" style="left:29px;top:67px;letter-spacing:0px">Компьютер DPC</div>
<div class="a" style="left:265px;top:82px;width:150px;height:0;border-top:1px dotted #e03030"></div>
<div class="c" style="left:432px;top:67px">2</div>
<div class="c r" style="left:487px;width:122px;top:67px">1,000</div>
<div class="c" style="left:626px;top:67px">шт</div>
<div class="c r" style="left:723px;width:100px;top:67px">35 900,00</div>
<div class="c r" style="left:840px;width:100px;top:67px">35 900,00</div>
<div class="c" style="left:957px;top:67px">Без НДС</div>
<div class="c r" style="left:1183px;width:120px;top:67px">35 900,00</div>
<div class="hl" style="top:117px;width:1816px;left:0"></div>
<div class="c" style="left:29px;top:96px;letter-spacing:0px">Midtower Aerocool NightHak Black</div>
<div class="a" style="left:265px;top:111px;width:150px;height:0;border-top:1px dotted #e03030"></div>
<div class="c" style="left:432px;top:96px">3</div>
<div class="c r" style="left:487px;width:122px;top:96px">1,000</div>
<div class="c" style="left:626px;top:96px">шт</div>
<div class="c r" style="left:723px;width:100px;top:96px">2 665,00</div>
<div class="c r" style="left:840px;width:100px;top:96px">2 665,00</div>
<div class="c" style="left:957px;top:96px">Без НДС</div>
<div class="c r" style="left:1183px;width:120px;top:96px">2 665,00</div>
<div class="hl" style="top:146px;width:1816px;left:0"></div>
<div class="c" style="left:29px;top:125px;letter-spacing:-0.15px">GIGABYTE Z390 GAMING X</div>
<div class="a" style="left:265px;top:140px;width:150px;height:0;border-top:1px dotted #e03030"></div>
<div class="c" style="left:432px;top:125px">4</div>
<div class="c r" style="left:487px;width:122px;top:125px">1,000</div>
<div class="c" style="left:626px;top:125px">шт</div>
<div class="c r" style="left:723px;width:100px;top:125px">8 749,00</div>
<div class="c r" style="left:840px;width:100px;top:125px">8 749,00</div>
<div class="c" style="left:957px;top:125px">Без НДС</div>
<div class="c r" style="left:1183px;width:120px;top:125px">8 749,00</div>
<div class="hl" style="top:175px;width:1816px;left:0"></div>
<div class="c" style="left:29px;top:154px;letter-spacing:0px">HexaCore Intel Core i5, 4400 MHz (...</div>
<div class="a" style="left:265px;top:169px;width:150px;height:0;border-top:1px dotted #e03030"></div>
<div class="c" style="left:432px;top:154px">5</div>
<div class="c r" style="left:487px;width:122px;top:154px">1,000</div>
<div class="c" style="left:626px;top:154px">шт</div>
<div class="c r" style="left:723px;width:100px;top:154px">15 499,00</div>
<div class="c r" style="left:840px;width:100px;top:154px">15 499,00</div>
<div class="c" style="left:957px;top:154px">Без НДС</div>
<div class="c r" style="left:1183px;width:120px;top:154px">15 499,00</div>
<div class="hl" style="top:204px;width:1816px;left:0"></div>
<div class="c" style="left:29px;top:183px;letter-spacing:-0.065px">Intel(R) Ethernet Connection (7) I21...</div>
<div class="a" style="left:265px;top:198px;width:150px;height:0;border-top:1px dotted #e03030"></div>
<div class="c" style="left:432px;top:183px">6</div>
<div class="c r" style="left:487px;width:122px;top:183px">1,000</div>
<div class="c" style="left:626px;top:183px">шт</div>
<div class="c r" style="left:723px;width:100px;top:183px">120,00</div>
<div class="c r" style="left:840px;width:100px;top:183px">120,00</div>
<div class="c" style="left:957px;top:183px">Без НДС</div>
<div class="c r" style="left:1183px;width:120px;top:183px">120,00</div>
<div class="hl" style="top:233px;width:1816px;left:0"></div>
<div class="c" style="left:29px;top:212px;letter-spacing:-0.065px">Intel(R) Ethernet Connection (7) I21...</div>
<div class="a" style="left:265px;top:227px;width:150px;height:0;border-top:1px dotted #e03030"></div>
<div class="c" style="left:432px;top:212px">7</div>
<div class="c r" style="left:487px;width:122px;top:212px">1,000</div>
<div class="c" style="left:626px;top:212px">шт</div>
<div class="c r" style="left:723px;width:100px;top:212px">120,00</div>
<div class="c r" style="left:840px;width:100px;top:212px">120,00</div>
<div class="c" style="left:957px;top:212px">Без НДС</div>
<div class="c r" style="left:1183px;width:120px;top:212px">120,00</div>
<div class="hl" style="top:262px;width:1816px;left:0"></div>
<div class="c" style="left:29px;top:241px;letter-spacing:-0.15px">Kingston HyperX KHX2666C16/16G</div>
<div class="a" style="left:265px;top:256px;width:150px;height:0;border-top:1px dotted #e03030"></div>
<div class="c" style="left:432px;top:241px">8</div>
<div class="c r" style="left:487px;width:122px;top:241px">1,000</div>
<div class="c" style="left:626px;top:241px">шт</div>
<div class="c r" style="left:723px;width:100px;top:241px">4 749,00</div>
<div class="c r" style="left:840px;width:100px;top:241px">4 749,00</div>
<div class="c" style="left:957px;top:241px">Без НДС</div>
<div class="c r" style="left:1183px;width:120px;top:241px">4 749,00</div>
</div>
<div class="t" style="left:61px;top:989px;color:#444;font-size:12.7px">Комментарий:</div>
<div class="inp" style="left:226px;top:984px;width:1307px;height:25px"></div>
<div class="t" style="left:1543px;top:989px;color:#444">Сумма документа:</div>
<div class="inp dis" style="left:1660px;top:984px;width:131px;height:25px"><div class="t r" style="right:3px;top:4px;color:#222;text-align:right">0,00</div></div>
<div class="t" style="left:1801px;top:989px;color:#444">руб.</div>
<svg class="a" style="left:63px;top:1020.6px" width="12" height="13" viewBox="0 0 12 13"><circle cx="5.6" cy="3.8" r="2.7" fill="#eab060" stroke="#3a2a1a" stroke-width=".5"/><path d="M2.8 3.2 C3 -0.2 8.2 -0.2 8.4 3.2 C7.4 1.6 3.8 1.6 2.8 3.2Z" fill="#3a2a1a"/><path d="M1 12.4 V10.6 C1 8.2 3 7.4 5.6 7.4 C8.2 7.4 10.2 8.2 10.2 10.6 V12.4Z" fill="#2f8fc0"/><path d="M4.8 7.4 L5.6 9.8 L6.4 7.4Z" fill="#fff"/></svg>
<a class="l" style="left:93px;top:1021px;border-bottom:none;text-decoration:underline;color:#2255bb;font-size:12.9px">Новый: &lt;не записан !&gt; Администратор</a>
<svg class="a" style="left:1724px;top:1023px" width="13" height="11" viewBox="0 0 13 11"><rect x="0.5" y="0.5" width="12" height="10" rx="1" fill="#eef1f6" stroke="#8a93a6" stroke-width="1"/><path d="M3 3.5H10M3 5.5H10M3 7.5H10" stroke="#6a7386" stroke-width="1"/></svg>
<div class="t" style="left:1751px;top:1021px;color:#8c2a1c">Новый</div>
</body>
</html>
